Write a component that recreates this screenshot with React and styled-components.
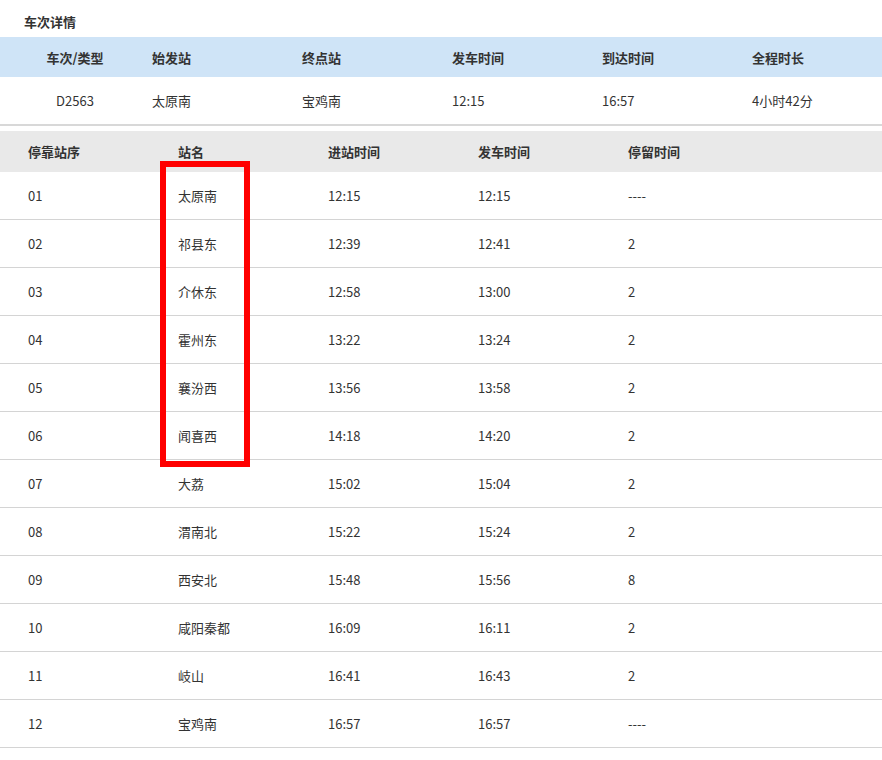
import React from 'react';
import styled, {createGlobalStyle} from 'styled-components';

const Global = createGlobalStyle`
  body { margin: 0; background: #fff; font-family: "Microsoft YaHei", "Noto Sans CJK SC", sans-serif; color: #333; }
`;

const train = ['D2563', '太原南', '宝鸡南', '12:15', '16:57', '4小时42分'];
const trainHead = ['车次/类型', '始发站', '终点站', '发车时间', '到达时间', '全程时长'];

const stops = [
	['01', '太原南', '12:15', '12:15', '----'],
	['02', '祁县东', '12:39', '12:41', '2'],
	['03', '介休东', '12:58', '13:00', '2'],
	['04', '霍州东', '13:22', '13:24', '2'],
	['05', '襄汾西', '13:56', '13:58', '2'],
	['06', '闻喜西', '14:18', '14:20', '2'],
	['07', '大荔', '15:02', '15:04', '2'],
	['08', '渭南北', '15:22', '15:24', '2'],
	['09', '西安北', '15:48', '15:56', '8'],
	['10', '咸阳秦都', '16:09', '16:11', '2'],
	['11', '岐山', '16:41', '16:43', '2'],
	['12', '宝鸡南', '16:57', '16:57', '----'],
];
const stopHead = ['停靠站序', '站名', '进站时间', '发车时间', '停留时间'];

export default function App() {
	return (
		<Page>
			<Global/>
			<Title>车次详情</Title>
			<TrainHead>
				{trainHead.map((t, i) => <TCell key={t} center={i === 0}>{t}</TCell>)}
			</TrainHead>
			<TrainRow>
				{train.map((t, i) => <TCell key={i} center={i === 0}>{t}</TCell>)}
			</TrainRow>
			<StopHead>
				{stopHead.map((t) => <SCell key={t}>{t}</SCell>)}
			</StopHead>
			{stops.map((s) => (
				<StopRow key={s[0]}>
					{s.map((t, i) => <SCell key={i}>{t}</SCell>)}
				</StopRow>
			))}
			<Highlight/>
		</Page>
	);
}

const Page = styled.div`
  position: relative;
  width: 882px;
  font-size: 13px;
`;
const Title = styled.div`
  height: 37px;
  padding-left: 24px;
  line-height: 43px;
  font-weight: bold;
`;
const Grid = styled.div`
  display: grid;
  grid-template-columns: repeat(6, 150px);
  align-items: center;
`;
const TrainHead = styled(Grid)`
  height: 40px;
  background: #cfe4f7;
  font-weight: bold;
`;
const TrainRow = styled(Grid)`
  height: 47px;
  border-bottom: 2px solid #d8d8d8;
  margin-bottom: 5px;
`;
const TCell = styled.div`
  padding-left: ${p => p.center ? '0' : '2px'};
  text-align: ${p => p.center ? 'center' : 'left'};
`;
const StopHead = styled.div`
  display: grid;
  grid-template-columns: repeat(5, 150px);
  align-items: center;
  height: 41px;
  padding-left: 28px;
  background: #e9e9e9;
  font-weight: bold;
`;
const StopRow = styled(StopHead)`
  height: 47px;
  background: #fff;
  font-weight: normal;
  border-bottom: 1px solid #d4d4d4;
`;
const SCell = styled.div``;
const Highlight = styled.div`
  position: absolute;
  left: 160px;
  top: 161px;
  width: 90px;
  height: 306px;
  box-sizing: border-box;
  border: 6px solid #f00;
`;
